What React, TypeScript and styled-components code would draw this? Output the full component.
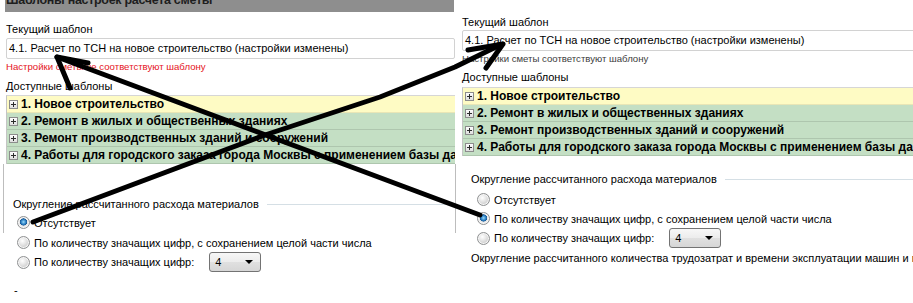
import React from "react";
import styled, { createGlobalStyle } from "styled-components";

const GlobalStyle = createGlobalStyle`
  html, body { margin: 0; padding: 0; background: #fff; }
  body {
    font-family: "Liberation Sans", Arial, sans-serif;
    font-size: 11px;
    color: #000;
    overflow: hidden;
  }
  * { box-sizing: border-box; }
`;

const Canvas = styled.div`
  position: relative;
  width: 913px;
  height: 303px;
  display: flex;
  overflow: hidden;
  background: #fff;
`;

const Panel = styled.section<{ $w: number; $pl: number; $pt: number }>`
  flex: none;
  width: ${(p) => p.$w}px;
  padding: ${(p) => p.$pt}px 0 0 ${(p) => p.$pl}px;
  display: flex;
  flex-direction: column;
  overflow: hidden;
`;

const TitleBar = styled.div`
  width: 449px;
  height: 12px;
  margin-left: -1px;
  background: #8e8e8e;
  overflow: hidden;
`;

const TitleText = styled.div`
  margin-top: -6px;
  padding-left: 1px;
  font-size: 12.5px;
  line-height: 12px;
  font-weight: bold;
  letter-spacing: -0.3px;
  color: #1e1e1e;
  white-space: nowrap;
`;

const Caption = styled.div<{ $mt: number }>`
  margin-top: ${(p) => p.$mt}px;
  line-height: 14px;
  white-space: nowrap;
`;

const Field = styled.div<{ $mt: number; $w: number }>`
  margin-top: ${(p) => p.$mt}px;
  width: ${(p) => p.$w}px;
  height: 21px;
  border: 1px solid #d2d2d2;
  border-radius: 2px;
  padding-left: 2px;
  line-height: 19px;
  white-space: nowrap;
  background: #fff;
`;

const Status = styled.div<{ $mt: number; $color: string }>`
  margin-top: ${(p) => p.$mt}px;
  font-size: 9.6px;
  line-height: 12px;
  color: ${(p) => p.$color};
  white-space: nowrap;
`;

const List = styled.div<{ $mt: number; $w: number }>`
  margin-top: ${(p) => p.$mt}px;
  width: ${(p) => p.$w}px;
  border-top: 1px solid #d6d6d6;
  border-left: 1px solid #c4c4c4;
  overflow: hidden;
`;

const Row = styled.div<{ $current?: boolean }>`
  display: flex;
  align-items: center;
  gap: 3px;
  height: 17px;
  padding-left: 2px;
  background: ${(p) => (p.$current ? "#fefbc4" : "#c4dfc4")};
  border-bottom: 1px solid ${(p) => (p.$current ? "#e9e6b6" : "#aec6ae")};
  font-size: 12px;
  font-weight: bold;
  white-space: nowrap;
`;

const Expand = styled.svg`
  flex: none;
  width: 9px;
  height: 9px;
`;

const Frame = styled.div`
  margin-left: -3px;
  width: 453px;
  height: 69px;
  border-left: 1px solid #bdbdbd;
  border-right: 1px solid #bdbdbd;
  padding-left: 9px;
  padding-top: 33px;
`;

const GroupHeader = styled.div<{ $mt?: number; $ml?: number }>`
  display: flex;
  align-items: center;
  gap: 8px;
  margin-top: ${(p) => p.$mt ?? 0}px;
  margin-left: ${(p) => p.$ml ?? 0}px;
  line-height: 14px;
  white-space: nowrap;
  &::after {
    content: "";
    flex: 1;
    min-width: 200px;
    border-top: 1px solid #d5dfe5;
  }
`;

const Options = styled.div<{ $mt: number; $pl: number }>`
  margin-top: ${(p) => p.$mt}px;
  padding-left: ${(p) => p.$pl}px;
  display: flex;
  flex-direction: column;
`;

const Option = styled.label<{ $h: number }>`
  display: flex;
  align-items: center;
  gap: 4px;
  min-height: ${(p) => p.$h}px;
  white-space: nowrap;
`;

const Radio = styled.span<{ $on?: boolean }>`
  flex: none;
  width: 13px;
  height: 13px;
  border-radius: 50%;
  border: 1px solid #8f9192;
  background: ${(p) =>
    p.$on
      ? "radial-gradient(circle at 50% 45%, #9fdcf7 0, #3a8fd0 2px, #175a99 3.4px, #e2e2e2 3.8px, #f4f4f4 6px)"
      : "radial-gradient(circle at 40% 35%, #ffffff 0, #eaeaea 3px, #d4d4d4 6px)"};
  box-shadow: inset 0 0 0 1px #f6f6f6;
`;

const ComboLabelGap = styled.span`
  display: inline-block;
  width: 7px;
`;

const Combo = styled.span`
  display: inline-flex;
  align-items: center;
  justify-content: space-between;
  width: 52px;
  height: 20px;
  padding: 0 7px 0 5px;
  border: 1px solid #737373;
  border-radius: 3px;
  background: linear-gradient(#f7f7f7, #ececec 50%, #e0e0e0 51%, #d6d6d6);
`;

const Caret = styled.span`
  width: 0;
  height: 0;
  border-left: 4px solid transparent;
  border-right: 4px solid transparent;
  border-top: 4px solid #000;
`;

const Note = styled.div<{ $mt: number; $ml: number }>`
  margin-top: ${(p) => p.$mt}px;
  margin-left: ${(p) => p.$ml}px;
  line-height: 14px;
  white-space: nowrap;
`;

const Overlay = styled.svg`
  position: absolute;
  left: 0;
  top: 0;
  pointer-events: none;
`;

const templates = [
  "1. Новое строительство",
  "2. Ремонт в жилых и общественных зданиях",
  "3. Ремонт производственных зданий и сооружений",
  "4. Работы для городского заказа города Москвы с применением базы данных",
];

const PlusBox = () => (
  <Expand viewBox="0 0 9 9">
    <defs>
      <linearGradient id="pb" x1="0" y1="0" x2="0" y2="1">
        <stop offset="0" stopColor="#ffffff" />
        <stop offset="1" stopColor="#dcdcdc" />
      </linearGradient>
    </defs>
    <rect x="0.5" y="0.5" width="8" height="8" fill="url(#pb)" stroke="#8c8c8c" />
    <path d="M2 4.5h5M4.5 2v5" stroke="#2b2b2b" strokeWidth="1" />
  </Expand>
);

const TemplateList = ({ mt, w }: { mt: number; w: number }) => (
  <List $mt={mt} $w={w}>
    {templates.map((t, i) => (
      <Row key={t} $current={i === 0}>
        <PlusBox />
        {t}
      </Row>
    ))}
  </List>
);

const Choice = ({ on, h, children }: { on?: boolean; h: number; children: React.ReactNode }) => (
  <Option $h={h}>
    <Radio $on={on} />
    {children}
  </Option>
);

const DigitsChoice = ({ on, h }: { on?: boolean; h: number }) => (
  <Choice on={on} h={h}>
    По количеству значащих цифр:
    <ComboLabelGap />
    <Combo>
      4
      <Caret />
    </Combo>
  </Choice>
);

export default function App() {
  return (
    <>
      <GlobalStyle />
      <Canvas>
        <Panel $w={458} $pl={6} $pt={0}>
          <TitleBar>
            <TitleText>Шаблоны настроек расчета сметы</TitleText>
          </TitleBar>
          <Caption $mt={10}>Текущий шаблон</Caption>
          <Field $mt={2} $w={449}>
            4.1. Расчет по ТСН на новое строительство (настройки изменены)
          </Field>
          <Status $mt={2} $color="#e5131c">
            Настройки сметы не соответствуют шаблону
          </Status>
          <Caption $mt={6}>Доступные шаблоны</Caption>
          <TemplateList mt={2} w={449} />
          <Frame>
            <GroupHeader>Округление рассчитанного расхода материалов</GroupHeader>
            <Options $mt={2} $pl={4}>
              <Choice on h={19}>
                Отсутствует
              </Choice>
            </Options>
          </Frame>
          <Options $mt={0} $pl={11}>
            <Choice h={19}>По количеству значащих цифр, с сохранением целой части числа</Choice>
            <DigitsChoice h={20} />
          </Options>
          <Note $mt={11} $ml={8}>
            -
          </Note>
        </Panel>

        <Panel $w={455} $pl={4} $pt={15}>
          <Caption $mt={0}>Текущий шаблон</Caption>
          <Field $mt={1} $w={520}>
            4.1. Расчет по ТСН на новое строительство (настройки изменены)
          </Field>
          <Status $mt={2} $color="#3c3c3c">
            Настройки сметы соответствуют шаблону
          </Status>
          <Caption $mt={5}>Доступные шаблоны</Caption>
          <TemplateList mt={3} w={520} />
          <GroupHeader $mt={16} $ml={9}>
            Округление рассчитанного расхода материалов
          </GroupHeader>
          <Options $mt={4} $pl={15}>
            <Choice h={19}>Отсутствует</Choice>
            <Choice on h={19}>
              По количеству значащих цифр, с сохранением целой части числа
            </Choice>
            <DigitsChoice h={19} />
          </Options>
          <Note $mt={3} $ml={9}>
            Округление рассчитанного количества трудозатрат и времени эксплуатации машин и механизмов
          </Note>
        </Panel>

        <Overlay width="913" height="303" viewBox="0 0 913 303">
          <g stroke="#000" strokeWidth="5" strokeLinecap="round" strokeLinejoin="round" fill="none">
            <path d="M33 222 L265 135 L380 97 L455 67 L500 45" />
            <path d="M503 44 L468 50 M503 44 L486 68" />
            <path d="M480 215 L57 57" />
            <path d="M57 57 L88 63 M57 57 L70 88" />
          </g>
        </Overlay>
      </Canvas>
    </>
  );
}
